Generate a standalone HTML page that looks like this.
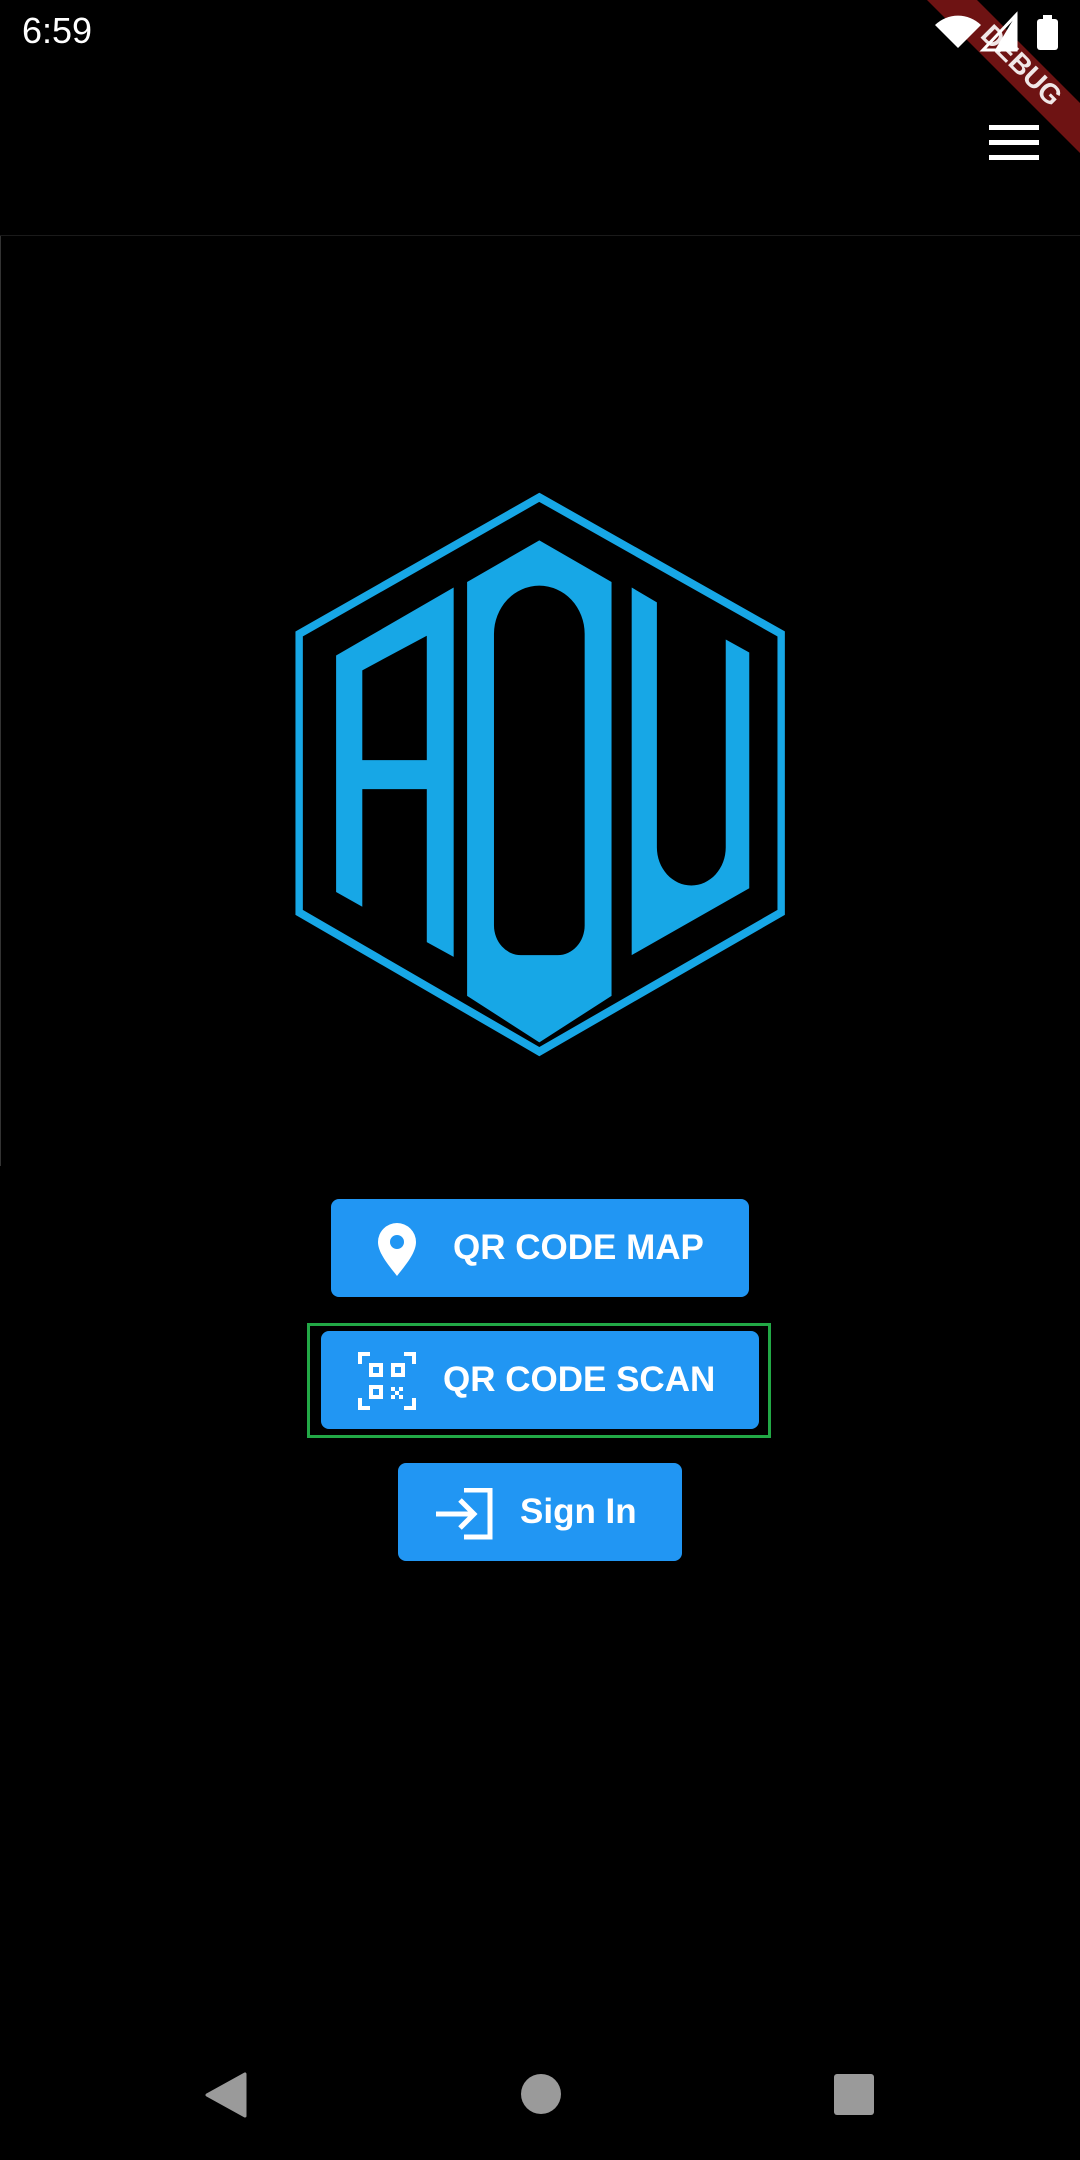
<!DOCTYPE html>
<html><head><meta charset="utf-8"><style>
html,body{margin:0;padding:0;background:#000;width:1080px;height:2160px;overflow:hidden;position:relative;font-family:"Liberation Sans",Roboto,sans-serif}
.abs{position:absolute}
.btn{position:absolute;background:#2196f3;border-radius:8px;color:#fff;font-size:35px;font-weight:bold;display:flex;align-items:center;box-sizing:border-box;height:98px}
</style></head><body>
<div class="abs" style="left:22px;top:10px;color:#fff;font-size:36px;">6:59</div>
<svg class="abs" style="left:0;top:0" width="1080" height="240">
<polygon points="927,0 977,0 1080,103 1080,153" fill="#7a1515" fill-opacity="0.9"/>
<text x="0" y="0" transform="translate(1015,72) rotate(45)" fill="#fff" font-size="28" font-weight="bold" text-anchor="middle" font-family="Liberation Sans" opacity="0.9">DEBUG</text>
<path d="M935,25 A33,33 0 0 1 981,25 L958,48 Z" fill="#fff"/>
<path d="M1016,15 L1016,50 L983,50 Z" fill="none" stroke="#fff" stroke-width="3"/>
<path d="M1016,15 L1016,50 L995,50 Z" fill="#fff"/>
<rect x="1037" y="19" width="21" height="31" rx="3" fill="#fff"/>
<rect x="1043" y="15" width="9" height="5" fill="#fff"/>
<rect x="989" y="125" width="50" height="5" fill="#fff"/>
<rect x="989" y="140" width="50" height="5" fill="#fff"/>
<rect x="989" y="155" width="50" height="5" fill="#fff"/>
<rect x="0" y="235" width="1080" height="1" fill="#1a1a1a"/>
</svg>
<div class="abs" style="left:0;top:236px;width:1px;height:930px;background:#333"></div>
<svg class="abs" style="left:279px;top:478px" width="524" height="646" viewBox="0 0 1560 1740" preserveAspectRatio="none">
<polygon points="775,52 1495,420 1495,1170 775,1545 60,1170 60,420" fill="none" stroke="#17a7e6" stroke-width="22"/>
<path fill="#17a7e6" fill-rule="evenodd" d="M170,478 L520,295 L520,1290 L440,1250 L440,838 L248,838 L248,1155 L170,1115 Z M248,518 L440,425 L440,760 L248,760 Z"/>
<path fill="#17a7e6" fill-rule="evenodd" d="M560,280 L775,168 L990,280 L990,1395 L775,1520 L560,1395 Z M640,420 A135,130 0 0 1 910,420 L910,1205 A80,80 0 0 1 830,1285 L720,1285 A80,80 0 0 1 640,1205 Z"/>
<path fill="#17a7e6" d="M1050,295 L1125,335 L1125,995 A102,102 0 0 0 1330,995 L1330,435 L1400,470 L1400,1105 L1050,1285 Z"/>
</svg>
<div class="btn" style="left:331px;top:1199px;width:418px;padding-left:122px">QR CODE MAP</div>
<svg class="abs" style="left:375px;top:1220px" width="44" height="60" viewBox="0 0 44 60"><path d="M22,3 A19,19 0 0 1 41,22 C41,34 28,48 22,56 C16,48 3,34 3,22 A19,19 0 0 1 22,3 Z M22,15 A7,7 0 1 0 22,29 A7,7 0 1 0 22,15 Z" fill="#fff" fill-rule="evenodd"/></svg>
<div class="abs" style="left:307px;top:1323px;width:464px;height:115px;border:3px solid #22a846;box-sizing:border-box"></div>
<div class="btn" style="left:321px;top:1331px;width:438px;padding-left:122px">QR CODE SCAN</div>
<svg class="abs" style="left:358px;top:1352px" width="58" height="58" viewBox="0 0 58 58" fill="none" stroke="#fff" stroke-width="4">
<path d="M2,12 V2 H12 M46,2 H56 V12 M2,46 V56 H12 M46,56 H56 V46"/>
<rect x="13" y="13" width="10" height="10"/><rect x="35" y="13" width="10" height="10"/><rect x="13" y="35" width="10" height="10"/>
<path d="M33,35h4v4h-4zM41,35h4v4h-4zM37,39h4v4h-4zM33,43h4v4h-4zM41,43h4v4h-4z" fill="#fff" stroke="none"/>
</svg>
<div class="btn" style="left:398px;top:1463px;width:284px;padding-left:122px">Sign In</div>
<svg class="abs" style="left:436px;top:1488px" width="60" height="52" viewBox="0 0 60 52" fill="none" stroke="#fff" stroke-width="5">
<path d="M0,26 H38 M24,12 L38,26 L24,40"/>
<path d="M28,2 H54 V49 H28"/>
</svg>
<svg class="abs" style="left:0;top:2060px" width="1080" height="70">
<path d="M245,14 L245,56 L207,35 Z" fill="#9a9a9a" stroke="#9a9a9a" stroke-width="3" stroke-linejoin="round"/>
<circle cx="541" cy="34" r="20" fill="#9a9a9a"/>
<rect x="834" y="14" width="40" height="41" rx="3" fill="#9a9a9a"/>
</svg>
</body></html>
